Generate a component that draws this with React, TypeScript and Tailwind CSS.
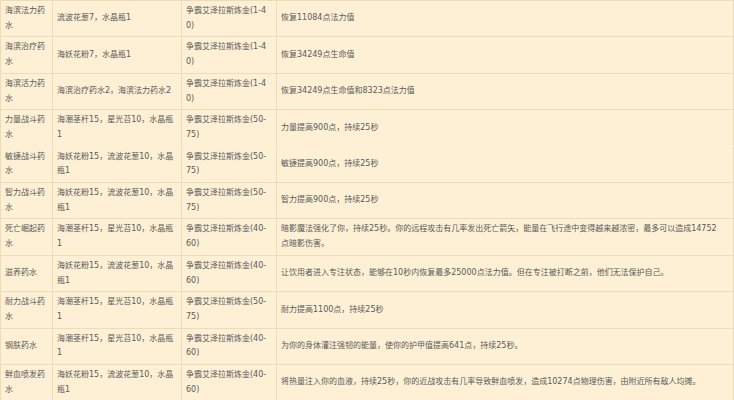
const rows = [
  ["海滨法力药水", "流波花葱7，水晶瓶1", "争霸艾泽拉斯炼金(1-40)", "恢复11084点法力值"],
  ["海滨治疗药水", "海妖花粉7，水晶瓶1", "争霸艾泽拉斯炼金(1-40)", "恢复34249点生命值"],
  ["海滨活力药水", "海滨治疗药水2，海滨法力药水2", "争霸艾泽拉斯炼金(1-40)", "恢复34249点生命值和8323点法力值"],
  ["力量战斗药水", "海潮茎杆15，星光苔10，水晶瓶1", "争霸艾泽拉斯炼金(50-75)", "力量提高900点，持续25秒"],
  ["敏捷战斗药水", "海妖花粉15，流波花葱10，水晶瓶1", "争霸艾泽拉斯炼金(50-75)", "敏捷提高900点，持续25秒"],
  ["智力战斗药水", "海妖花粉15，流波花葱10，水晶瓶1", "争霸艾泽拉斯炼金(50-75)", "智力提高900点，持续25秒"],
  ["死亡崛起药水", "海潮茎杆15，星光苔10，水晶瓶1", "争霸艾泽拉斯炼金(40-60)", "暗影魔法强化了你，持续25秒。你的远程攻击有几率发出死亡箭矢，能量在飞行途中变得越来越浓密，最多可以造成14752点暗影伤害。"],
  ["滋养药水", "海妖花粉15，流波花葱10，水晶瓶1", "争霸艾泽拉斯炼金(40-60)", "让饮用者进入专注状态，能够在10秒内恢复最多25000点法力值。但在专注被打断之前，他们无法保护自己。"],
  ["耐力战斗药水", "海潮茎杆15，星光苔10，水晶瓶1", "争霸艾泽拉斯炼金(50-75)", "耐力提高1100点，持续25秒"],
  ["钢肤药水", "海潮茎杆15，星光苔10，水晶瓶1", "争霸艾泽拉斯炼金(40-60)", "为你的身体灌注强韧的能量，使你的护甲值提高641点，持续25秒。"],
  ["鲜血喷发药水", "海妖花粉15，流波花葱10，水晶瓶1", "争霸艾泽拉斯炼金(40-60)", "将热量注入你的血液，持续25秒，你的近战攻击有几率导致鲜血喷发，造成10274点物理伤害，由附近所有敌人均摊。"],
]

export default function App() {
  return (
    <div className="w-[734px] h-[400px] overflow-hidden bg-[#fdf0d5] border-l border-[#ecdcb8] font-['DejaVu_Sans','Noto_Sans_CJK_SC',sans-serif] text-[8px] leading-[14.7px] text-[#5a5a5a] break-all [line-break:anywhere]">
      {rows.map((r, i) => (
        <div
          key={i}
          className={
            "grid grid-cols-[52px_129px_95px_1fr] border-t " +
            (i === 4 ? "border-[#fdf0d5]" : "border-[#ecdcb8]")
          }
        >
          <div className="flex items-center border-r border-[#ecdcb8] py-[3px] pl-[4px] pr-[3px]">
            <span>{r[0]}</span>
          </div>
          <div className="flex items-center border-r border-[#ecdcb8] py-[3px] pl-[4px] pr-[5px]">
            <span>{r[1]}</span>
          </div>
          <div className="flex items-center border-r border-[#ecdcb8] py-[3px] pl-[4px] pr-[7px]">
            <span>{r[2]}</span>
          </div>
          <div className="flex items-center border-r border-[#ecdcb8] py-[3px] pl-[4px] pr-[13px]">
            <span>{r[3]}</span>
          </div>
        </div>
      ))}
    </div>
  )
}
